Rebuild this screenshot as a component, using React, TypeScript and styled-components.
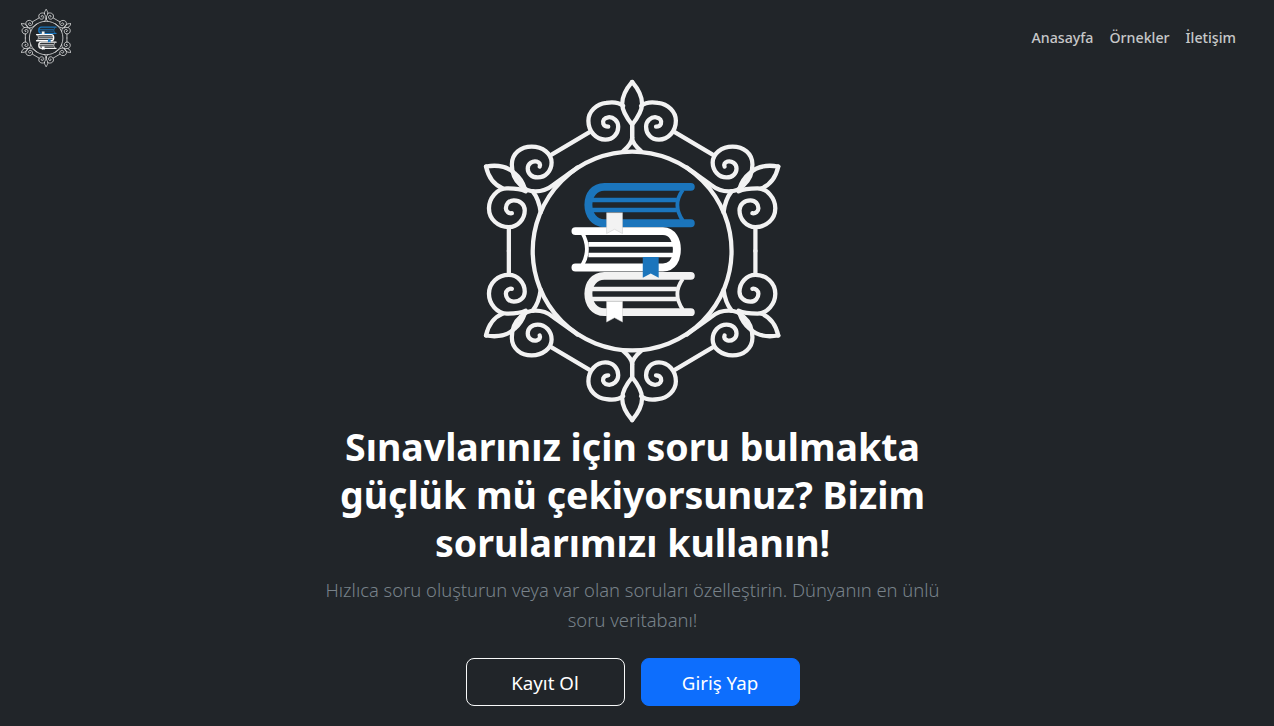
import React from 'react';
import styled, { createGlobalStyle } from 'styled-components';

const GlobalStyle = createGlobalStyle`
  html, body {
    margin: 0;
    background: #212529;
  }
  body {
    font-family: "Noto Sans", "Open Sans", sans-serif;
    color: #fff;
  }
`;

const Page = styled.div`
  width: 1265px;
  min-height: 726px;
  display: flex;
  flex-direction: column;
`;

const Header = styled.header`
  display: flex;
  align-items: flex-start;
  justify-content: space-between;
  padding: 9px 29px 0 21px;
  height: 79px;
  box-sizing: border-box;
`;

const Nav = styled.nav`
  display: flex;
  gap: 16px;
  margin-top: 17px;
`;

const NavLink = styled.a`
  font-size: 14.2px;
  font-weight: 500;
  line-height: 24px;
  color: rgba(255, 255, 255, 0.75);
  cursor: pointer;
`;

const Hero = styled.main`
  display: flex;
  flex-direction: column;
  align-items: center;
  text-align: center;
`;

const Heading = styled.h1`
  width: 613px;
  margin: 0 0 8px;
  font-size: 37.5px;
  font-weight: 700;
  line-height: 48px;
`;

const Lead = styled.p`
  width: 622px;
  margin: 0 0 23px;
  font-size: 18.4px;
  font-weight: 300;
  line-height: 30px;
  color: #78828a;
`;

const Actions = styled.div`
  display: flex;
  gap: 16px;
`;

const Button = styled.button<{ $primary?: boolean }>`
  width: 159px;
  height: 48px;
  padding: 0;
  border-radius: 8px;
  border: 1px solid ${(p) => (p.$primary ? '#0d6efd' : '#f8f9fa')};
  background: ${(p) => (p.$primary ? '#0d6efd' : 'transparent')};
  color: #fff;
  font-family: inherit;
  font-size: 18.7px;
  cursor: pointer;
`;

const Mark = styled.svg<{ $height: number }>`
  display: block;
  height: ${(p) => p.$height}px;
  width: ${(p) => (p.$height * 300) / 346}px;
  flex: none;
`;

const BLUE = '#1b75bc';
const PALE = '#f2f2f2';

// one corner of the frame, the other three are mirrored from it
const Corner = () => (
  <g fill="none" stroke={PALE} strokeWidth={4.3} strokeLinecap="round" strokeLinejoin="round">
    <path d="M0,-170 C-6,-163 -10,-155 -10,-148 C-10,-140 -4,-132 0,-127 L0,-114" />
    <path d="M0,-114 C0,-110 -5,-104 -9,-100.5" />
    <path d="M-9,-146 C-14,-150 -20,-150 -26,-149 C-36,-148 -44,-140 -44,-131 C-44,-120 -36,-112 -27,-112 C-19,-112 -14,-118 -14,-125 C-14,-131 -19,-135 -24,-134.5 C-28,-134 -30,-131 -29,-128 C-28,-125.5 -26,-125 -24,-125" />
    <path d="M-42,-120 L-81,-97" />
    <path d="M-55,-84 C-63,-78 -72,-72 -80,-66 C-90,-58 -105,-58 -112,-66 C-119,-72 -121,-80 -121,-87 C-121,-98 -112,-105 -101,-105 C-90,-105 -81,-98 -81,-89 C-81,-81 -87,-74 -95,-74 C-101,-74 -105,-78 -105,-83 C-105,-88 -100,-91 -96,-90 C-93,-89 -92,-87 -93,-85" />
    <path d="M-100,-60 C-96,-55 -93,-47 -92,-39" />
    <path d="M-107,-60 C-113,-63 -120,-63 -126,-63 C-136,-63 -144,-53 -144,-43 C-144,-32 -135,-24 -124,-24 C-115,-24 -108,-32 -108,-41 C-108,-47 -113,-51 -119,-51 C-124,-51 -127,-47 -127,-43 C-127,-40 -124,-37.5 -121,-38" />
    <path d="M-124,-24 L-124,0" />
    <path d="M-147,-85 C-135,-87 -125,-85 -118,-78 C-113,-74 -110,-69 -108,-63" />
    <path d="M-147,-85 C-145,-76 -140,-67 -130,-63" />
  </g>
);

const SpineLeftBook = ({ color, top }: { color: string; top: number }) => (
  <g fill="none" stroke={color} strokeLinecap="round">
    <path
      strokeWidth={8}
      d={`M59,${top} L-28,${top} C-38,${top} -44,${top + 8} -44,${top + 18} C-44,${top + 28} -38,${top + 36.5} -28,${top + 36.5} L59,${top + 36.5}`}
    />
    <path strokeWidth={4.6} strokeLinecap="butt" d={`M-42,${top + 13.2} H45 M-42,${top + 23.2} H45`} />
    <path strokeWidth={3.8} strokeLinecap="butt" d={`M51,${top + 3} Q40,${top + 18} 51,${top + 34}`} />
  </g>
);

const Ribbon = ({ x, y, color }: { x: number; y: number; color: string }) => (
  <path
    d={`M${x},${y} h16 v21 l-8,-4.4 l-8,4.4 z`}
    fill={color}
    stroke={color === BLUE ? 'none' : '#c8c8c8'}
    strokeWidth={0.5}
  />
);

const Emblem = ({ height }: { height: number }) => (
  <Mark $height={height} viewBox="-150 -173 300 346">
    <Corner />
    <g transform="scale(-1,1)"><Corner /></g>
    <g transform="scale(1,-1)"><Corner /></g>
    <g transform="scale(-1,-1)"><Corner /></g>
    <circle r={100} fill="none" stroke={PALE} strokeWidth={4.3} />
    <SpineLeftBook color={BLUE} top={-64.5} />
    <g fill="none" stroke="#fff" strokeLinecap="round">
      <path strokeWidth={8} d="M-57,-20 L31,-20 C41,-20 45,-10 45,-2 C45,8 41,16.5 31,16.5 L-57,16.5" />
      <path strokeWidth={4.6} strokeLinecap="butt" d="M-44,-6.7 H42 M-44,4 H42" />
      <path strokeWidth={3.8} strokeLinecap="butt" d="M-50,-18 Q-41,-2 -50,14" />
    </g>
    <SpineLeftBook color={PALE} top={25} />
    <Ribbon x={-25.7} y={-38.5} color={PALE} />
    <Ribbon x={10.7} y={6} color={BLUE} />
    <Ribbon x={-25.7} y={50.5} color="#fff" />
  </Mark>
);

export default function App() {
  return (
    <Page>
      <GlobalStyle />
      <Header>
        <Emblem height={58} />
        <Nav>
          <NavLink>Anasayfa</NavLink>
          <NavLink>Örnekler</NavLink>
          <NavLink>İletişim</NavLink>
        </Nav>
      </Header>
      <Hero>
        <Emblem height={344} />
        <Heading>Sınavlarınız için soru bulmakta güçlük mü çekiyorsunuz? Bizim sorularımızı kullanın!</Heading>
        <Lead>Hızlıca soru oluşturun veya var olan soruları özelleştirin. Dünyanın en ünlü soru veritabanı!</Lead>
        <Actions>
          <Button>Kayıt Ol</Button>
          <Button $primary>Giriş Yap</Button>
        </Actions>
      </Hero>
    </Page>
  );
}
